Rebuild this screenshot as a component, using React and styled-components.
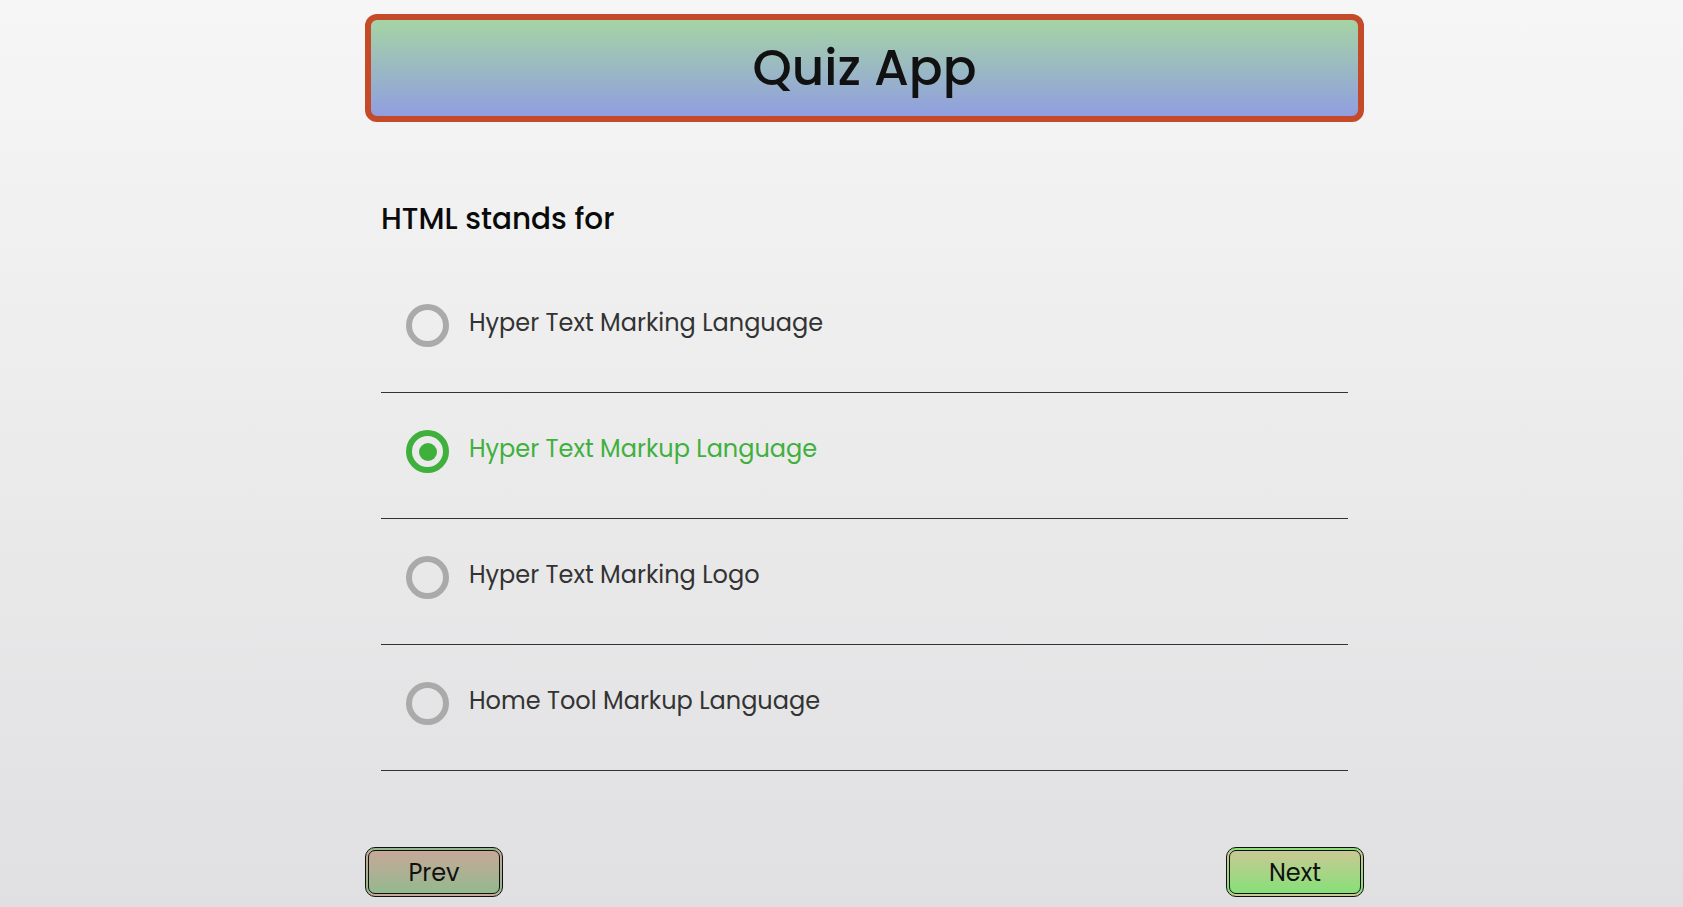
import React, { useState } from "react";
import styled, { createGlobalStyle } from "styled-components";

const GlobalStyle = createGlobalStyle`
  html, body {
    margin: 0;
    padding: 0;
  }
  body {
    min-height: 100vh;
    background: linear-gradient(180deg, #f6f6f6 0%, #e0e0e2 100%);
    font-family: "Poppins", "Inter", "Noto Sans", sans-serif;
    color: #333;
  }
`;

const Page = styled.div`
  height: 907px;
  overflow: hidden;
`;

const Container = styled.div`
  width: 999px;
  margin-left: 365px;
  padding-top: 14px;
`;

const Header = styled.header`
  height: 96px;
  display: flex;
  align-items: center;
  justify-content: center;
  border: 6px solid #c44a2a;
  border-radius: 12px;
  background: linear-gradient(180deg, #a5d4a5 0%, #909ee0 100%);
`;

const Title = styled.h1`
  margin: 0;
  font-size: 50px;
  font-weight: 500;
  color: #111;
`;

const Quiz = styled.section`
  padding: 0 16px;
`;

const Question = styled.h2`
  margin: 79px 0 30px;
  font-size: 29.5px;
  line-height: 36px;
  font-weight: 500;
  color: #0a0a0a;
`;

const OptionList = styled.ul`
  list-style: none;
  margin: 0;
  padding: 0;
`;

const Option = styled.li`
  display: flex;
  align-items: center;
  gap: 20px;
  padding: 37px 25px 45px;
  border-bottom: 1px solid #333;
  cursor: pointer;
  color: ${(p) => (p.$selected ? "#3fb03c" : "#333")};
`;

const Radio = styled.span`
  flex: none;
  width: 43px;
  height: 43px;
  box-sizing: border-box;
  border-radius: 50%;
  border: 6.5px solid ${(p) => (p.$selected ? "#3fb03c" : "#aaaaaa")};
  display: flex;
  align-items: center;
  justify-content: center;

  &::after {
    content: "";
    width: 18px;
    height: 18px;
    border-radius: 50%;
    background: #3fb03c;
    display: ${(p) => (p.$selected ? "block" : "none")};
  }
`;

const OptionText = styled.span`
  font-size: 24px;
  line-height: 29px;
  margin-top: -6px;
`;

const Footer = styled.div`
  display: flex;
  justify-content: space-between;
  margin-top: 76px;
`;

const NavButton = styled.button`
  width: 138px;
  height: 50px;
  border: 4px double #111;
  border-radius: 10px;
  font-family: inherit;
  font-size: 24px;
  color: #111;
  cursor: pointer;
  background: ${(p) =>
    p.$next
      ? "linear-gradient(180deg, #cac994 0%, #86e078 100%)"
      : "linear-gradient(180deg, #c7a899 0%, #93b98e 100%)"};
`;

const options = [
  "Hyper Text Marking Language",
  "Hyper Text Markup Language",
  "Hyper Text Marking Logo",
  "Home Tool Markup Language",
];

export default function App() {
  const [selected, setSelected] = useState(1);

  return (
    <Page>
      <GlobalStyle />
      <Container>
        <Header>
          <Title>Quiz App</Title>
        </Header>
        <Quiz>
          <Question>HTML stands for</Question>
          <OptionList>
            {options.map((text, i) => (
              <Option
                key={text}
                $selected={selected === i}
                onClick={() => setSelected(i)}
              >
                <Radio $selected={selected === i} />
                <OptionText>{text}</OptionText>
              </Option>
            ))}
          </OptionList>
        </Quiz>
        <Footer>
          <NavButton>Prev</NavButton>
          <NavButton $next>Next</NavButton>
        </Footer>
      </Container>
    </Page>
  );
}
